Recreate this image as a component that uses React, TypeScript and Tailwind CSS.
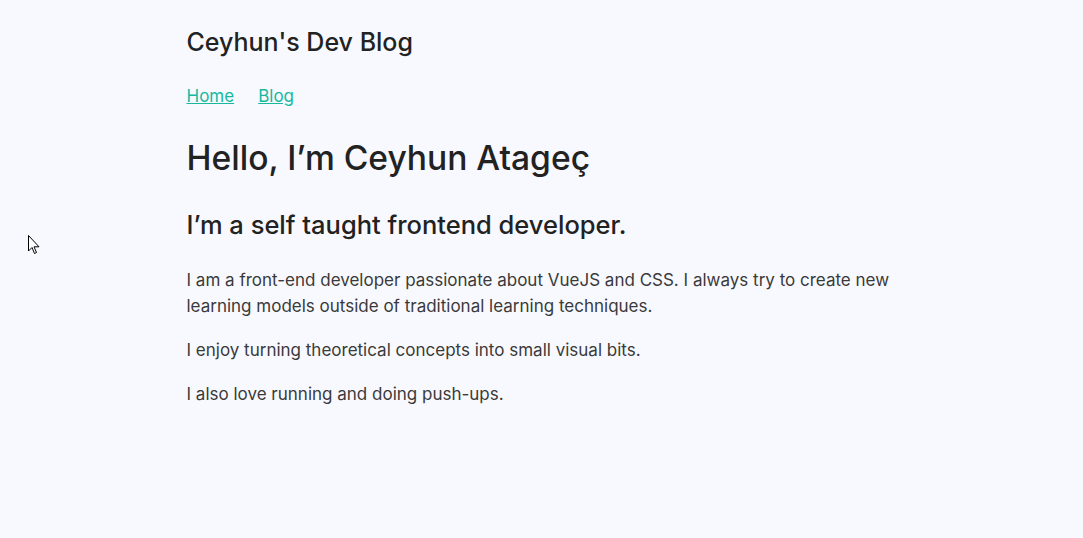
export default function App() {
  return (
    <div className="relative min-h-[538px] bg-[#f8f9fe] font-['Inter',sans-serif] text-[#222]">
      <div className="mx-auto w-[710px] pt-[24px]">
        <header>
          <h2 className="text-[25px] leading-[36px] font-medium">Ceyhun's Dev Blog</h2>
          <nav className="mt-[23px] flex gap-[24px] text-[17px] leading-[26px]">
            <a href="#" className="text-[#16b9a0] underline">Home</a>
            <a href="#" className="text-[#16b9a0] underline">Blog</a>
          </nav>
        </header>
        <main className="mt-[25px]">
          <h1 className="text-[33.6px] leading-[48px] font-medium">Hello, I’m Ceyhun Atageç</h1>
          <h2 className="mt-[25px] text-[25.5px] leading-[36px] font-medium">I’m a self taught frontend developer.</h2>
          <div className="mt-[24px] space-y-[18px] text-[17px] leading-[26px] text-[#3a3a3a]">
            <p>
              I am a front-end developer passionate about VueJS and CSS. I always try to create new learning models
              outside of traditional learning techniques.
            </p>
            <p>I enjoy turning theoretical concepts into small visual bits.</p>
            <p>I also love running and doing push-ups.</p>
          </div>
        </main>
      </div>
      <svg className="absolute left-[28px] top-[235px]" width="13" height="20" viewBox="0 0 13 20">
        <path d="M0.5 0.5 L0.5 16 L4 12.5 L6.5 18.5 L8.5 17.5 L6 11.8 L11 11.8 Z" fill="#fff" stroke="#000" strokeWidth="1" />
      </svg>
    </div>
  );
}
